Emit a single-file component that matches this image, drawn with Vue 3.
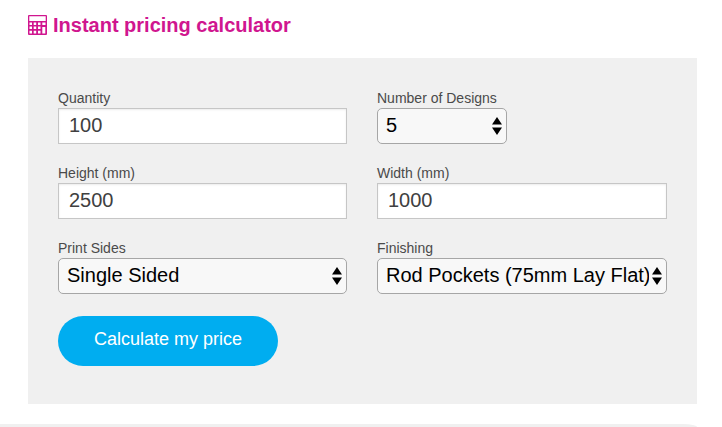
<script setup>
import { reactive } from 'vue'

const form = reactive({
  quantity: '100',
  designs: '5',
  height: '2500',
  width: '1000',
  sides: 'Single Sided',
  finishing: 'Rod Pockets (75mm Lay Flat)',
})

const fields = [
  { id: 'quantity', label: 'Quantity' },
  { id: 'designs', label: 'Number of Designs', options: ['1', '2', '3', '4', '5', '6'], short: true },
  { id: 'height', label: 'Height (mm)' },
  { id: 'width', label: 'Width (mm)' },
  { id: 'sides', label: 'Print Sides', options: ['Single Sided', 'Double Sided'] },
  { id: 'finishing', label: 'Finishing', options: ['Rod Pockets (75mm Lay Flat)', 'None'] },
]
</script>

<template>
  <main class="page">
    <section class="calculator">
      <h2 class="title">
        <svg class="title-icon" viewBox="0 0 20 20" aria-hidden="true">
          <path
            fill="currentColor"
            fill-rule="evenodd"
            d="M1 0H18Q19 0 19 1V19Q19 20 18 20H1Q0 20 0 19V1Q0 0 1 0ZM1.3 1.3V6H17.7V1.3ZM1.5 7.5V10H4V7.5ZM5.7 7.5V10H8.2V7.5ZM10 7.5V10H12.5V7.5ZM14.3 7.5V10H17.5V7.5ZM1.5 11.6V14H4V11.6ZM5.7 11.6V14H8.2V11.6ZM10 11.6V14H12.5V11.6ZM14.3 12V18.4H17.3V12ZM1.5 15.7V18.4H4V15.7ZM5.7 15.7V18.4H8.2V15.7ZM10 15.7V18.4H12.5V15.7Z"
          />
        </svg>
        Instant pricing calculator
      </h2>
      <form class="panel" @submit.prevent>
        <div class="fields">
          <div v-for="field in fields" :key="field.id" class="field">
            <label :for="field.id">{{ field.label }}</label>
            <div v-if="field.options" class="select" :class="{ short: field.short }">
              <select :id="field.id" v-model="form[field.id]">
                <option v-for="option in field.options" :key="option">{{ option }}</option>
              </select>
              <svg class="arrows" viewBox="0 0 10 18" aria-hidden="true">
                <path d="M5 0L10 7.5H0ZM0 10.5H10L5 18Z" />
              </svg>
            </div>
            <input v-else :id="field.id" v-model="form[field.id]" type="text" />
          </div>
        </div>
        <button class="submit" type="submit">Calculate my price</button>
      </form>
    </section>
    <div class="next-section"></div>
  </main>
</template>

<style>
body {
  background: #fff;
}
</style>

<style scoped>
.page {
  font-family: "Liberation Sans", Arial, sans-serif;
  padding-right: 25px;
}

.calculator {
  padding: 13px 0 20px 28px;
}

.title {
  display: flex;
  align-items: center;
  gap: 5px;
  margin: 0 0 21px;
  color: #d0168f;
  font-size: 20px;
  line-height: 24px;
  font-weight: 700;
}

.title-icon {
  width: 20px;
  height: 20px;
}

.panel {
  padding: 31px 30px 38px;
  background: #f0f0f0;
}

.fields {
  display: grid;
  grid-template-columns: 289fr 290fr;
  gap: 20px 30px;
}

.field {
  min-width: 0;
}

label {
  display: block;
  width: fit-content;
  padding-bottom: 1px;
  color: #4a4a4a;
  font-size: 14px;
  line-height: 18px;
}

input,
select {
  display: block;
  box-sizing: border-box;
  width: 100%;
  height: 36px;
  margin: 0;
  font-family: inherit;
  font-size: 20px;
  line-height: 24px;
}

input {
  padding: 0 10px 2px;
  border: 1px solid #c6c6c6;
  border-radius: 0;
  background: #fff;
  box-shadow: inset 0 1px 2px rgba(0, 0, 0, 0.08);
  color: #404040;
}

select {
  appearance: none;
  padding: 0 17px 2px 8px;
  border: 1px solid #a6a6a6;
  border-radius: 5px;
  background: #f8f8f8;
  color: #000;
}

.select {
  position: relative;
}

.short {
  width: 130px;
}

.arrows {
  position: absolute;
  top: 9px;
  right: 5px;
  width: 10px;
  height: 18px;
  pointer-events: none;
}

.submit {
  display: block;
  height: 50px;
  margin-top: 22px;
  padding: 0 36px 4px;
  border: 0;
  border-radius: 25px;
  background: #00adf0;
  color: #fff;
  font-family: inherit;
  font-size: 18px;
  line-height: 24px;
}

.next-section {
  height: 3px;
  border-radius: 0 14px 0 0 / 0 3px 0 0;
  background: #f0f0f0;
}
</style>
